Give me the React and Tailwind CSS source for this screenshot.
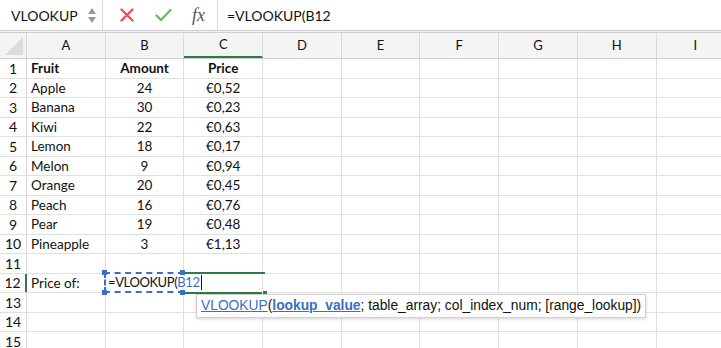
import React from 'react';

const COLS = ['A', 'B', 'C', 'D', 'E', 'F', 'G', 'H', 'I'];

const data = [
    ['Fruit', 'Amount', 'Price'],
    ['Apple', '24', '€0,52'],
    ['Banana', '30', '€0,23'],
    ['Kiwi', '22', '€0,63'],
    ['Lemon', '18', '€0,17'],
    ['Melon', '9', '€0,94'],
    ['Orange', '20', '€0,45'],
    ['Peach', '16', '€0,76'],
    ['Pear', '19', '€0,48'],
    ['Pineapple', '3', '€1,13'],
    ['', '', ''],
    ['Price of:', '', ''],
    ['', '', ''],
    ['', '', ''],
    ['', '', ''],
];

const cellFont = { fontFamily: 'Lato, "Open Sans", sans-serif' };

const Handle = ({ className }) => (
    <div className={`absolute w-[5px] h-[5px] bg-[#3b6fc2] ${className}`} />
);

export default function App() {
    return (
        <div className="w-[721px] h-[348px] overflow-hidden bg-white relative text-[#111]" style={cellFont}>
            {/* Formula bar */}
            <div className="flex items-center h-[30px]">
                <div className="w-[103px] h-full flex items-center justify-between pl-[11px] pr-[6px] border-r border-[#d9d9d9]">
                    <span className="text-[14px]">VLOOKUP</span>
                    <div className="flex flex-col gap-[3px]">
                        <svg width="8" height="6" viewBox="0 0 8 6"><path d="M4 0 L8 6 L0 6 Z" fill="#9a9a9a" /></svg>
                        <svg width="8" height="6" viewBox="0 0 8 6"><path d="M0 0 L8 0 L4 6 Z" fill="#9a9a9a" /></svg>
                    </div>
                </div>
                <div className="flex items-center h-full w-[115px] border-r border-[#d9d9d9]">
                    <svg className="ml-[17px]" width="14" height="14" viewBox="0 0 14 14">
                        <path d="M1.5 1.5 L12.5 12.5 M12.5 1.5 L1.5 12.5" stroke="#e0575b" strokeWidth="2.4" strokeLinecap="round" />
                    </svg>
                    <svg className="ml-[21px]" width="17" height="14" viewBox="0 0 17 14">
                        <path d="M1.5 7.5 L6 12 L15.5 2" stroke="#6cb76c" strokeWidth="2.4" fill="none" strokeLinecap="round" strokeLinejoin="round" />
                    </svg>
                    <span className="ml-[20px] text-[18px] italic text-[#555]" style={{ fontFamily: '"Liberation Serif", serif' }}>fx</span>
                </div>
                <span className="ml-[9px] text-[14px]">=VLOOKUP(B12</span>
            </div>

            {/* separator */}
            <div className="h-[3px] border-t border-b border-[#cfcfcf] bg-[#f0f0f0]" />

            {/* Column header */}
            <div className="flex h-[26px] bg-[#f4f4f4] border-b border-[#cdcdcd]">
                <div className="w-[27px] shrink-0 border-r border-[#d6d6d6] relative overflow-hidden">
                    <svg className="absolute right-[3px] bottom-[3px]" width="18" height="18" viewBox="0 0 18 18">
                        <path d="M18 0 L18 18 L0 18 Z" fill="#dcdcdc" />
                    </svg>
                </div>
                {COLS.map(c => (
                    <div
                        key={c}
                        className={`w-[78.7px] shrink-0 flex items-center justify-center text-[13px] border-r border-[#dadada] ${c === 'C' ? 'border-b-2 border-b-[#2f7a47]' : ''}`}
                    >
                        {c}
                    </div>
                ))}
            </div>

            {/* Rows */}
            <div className="relative">
                {data.map((row, i) => (
                    <div key={i} className="flex h-[19.5px] border-b border-[#e0e0e0]">
                        <div className={`w-[27px] shrink-0 flex items-center justify-center text-[14px] border-r ${i === 11 ? 'border-r-2 border-r-[#2f7a47]' : 'border-[#d6d6d6]'}`}>
                            {i + 1}
                        </div>
                        {COLS.map((c, j) => (
                            <div
                                key={c}
                                className={`w-[78.7px] shrink-0 flex items-center text-[13.5px] border-r border-[#e0e0e0] ${j === 0 ? 'justify-start pl-[4px]' : 'justify-center'} ${i === 0 ? 'font-bold' : ''}`}
                            >
                                {row[j] || ''}
                            </div>
                        ))}
                    </div>
                ))}

                {/* Active cell C12 frame */}
                <div className="absolute left-[182px] top-[213px] w-[83px] h-[2px] bg-[#2f7a47]" />
                <div className="absolute left-[182px] top-[233px] w-[83px] h-[2px] bg-[#2f7a47]" />
                <div className="absolute left-[262px] top-[231px] w-[6px] h-[6px] bg-[#2f7a47] border border-white" />

                {/* Referenced B12 marching ants */}
                <div className="absolute left-[104px] top-[213px] w-[80px] h-[21px] border-2 border-r-0 border-dashed border-[#3b6fc2] bg-white" />
                <Handle className="left-[102px] top-[211px]" />
                <Handle className="left-[180px] top-[211px]" />
                <Handle className="left-[102px] top-[231px]" />
                <Handle className="left-[180px] top-[231px]" />

                {/* editing text */}
                <div className="absolute left-[108px] top-[214px] h-[19px] flex items-center text-[13px] tracking-[-0.4px] whitespace-nowrap">
                    <span>=VLOOKUP(</span>
                    <span className="text-[#3b6fc2]">B12</span>
                    <span className="w-px h-[15px] bg-[#111] ml-[1px]" />
                </div>

                {/* tooltip */}
                <div
                    className="absolute left-[196px] top-[235px] h-[24px] px-[4px] flex items-center bg-white border border-[#d2d2d2] shadow-[0_1px_3px_rgba(0,0,0,0.18)] text-[13.8px] whitespace-nowrap"
                    style={{ fontFamily: '"Liberation Sans", Arial, sans-serif' }}
                >
                    <span className="text-[#3b6fc2] underline">VLOOKUP</span>
                    <span>(</span>
                    <span className="text-[#3b6fc2] underline font-bold">lookup_value</span>
                    <span>; table_array; col_index_num; [range_lookup])</span>
                </div>
            </div>
        </div>
    );
}
